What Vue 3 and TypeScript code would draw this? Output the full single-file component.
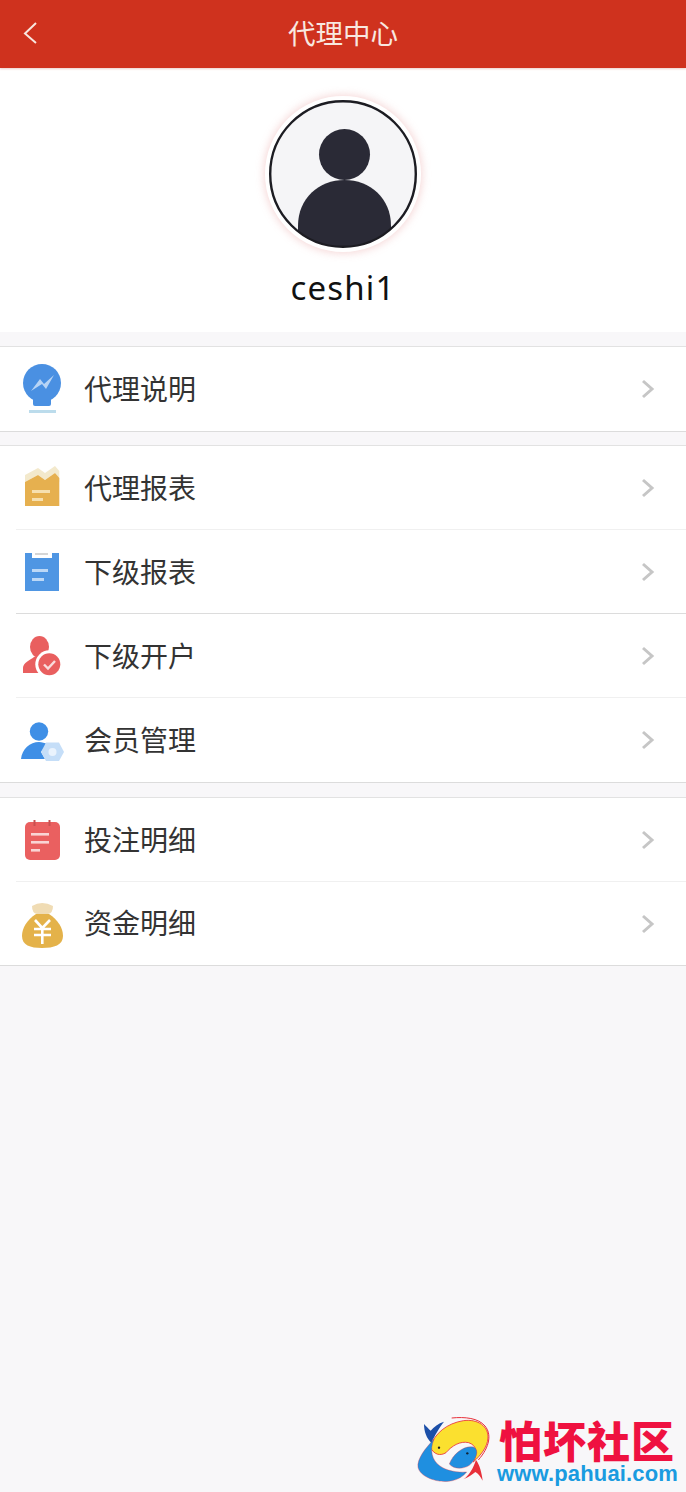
<template>
  <div class="page">
    <header class="top-bar">
      <svg class="back" width="18" height="24" viewBox="0 0 18 24">
        <path d="M15 2 L4 12.5 L15 22" fill="none" stroke="#f8e6df" stroke-width="2" />
      </svg>
      <h1 class="top-title">代理中心</h1>
    </header>

    <section class="profile">
      <div class="avatar">
        <svg width="148" height="148" viewBox="0 0 148 148">
          <defs>
            <clipPath id="avatar-clip"><circle cx="74" cy="74" r="73" /></clipPath>
          </defs>
          <circle cx="74" cy="74" r="73" fill="#f5f5f7" />
          <g clip-path="url(#avatar-clip)" fill="#2a2a36">
            <circle cx="75.500" cy="54.500" r="25.500" />
            <path d="M29 150 V126 C29 98 50 80 75.500 80 C101 80 122 98 122 126 V150 Z" />
          </g>
          <circle cx="74" cy="74" r="72.800" fill="none" stroke="#1c1c22" stroke-width="2.400" />
        </svg>
      </div>
      <div class="user-name">ceshi1</div>
    </section>

    <section v-for="(group, g) in groups" :key="g" class="group">
      <div v-for="(row, i) in group" :key="row.label" class="row">
        <svg class="icon" width="48" height="52" viewBox="0 0 48 52">
          <template v-if="row.icon === 'bulb'">
            <circle cx="24" cy="20" r="19" fill="#4a90e2" />
            <path d="M15 34 H33 V41 Q33 43 31 43 H17 Q15 43 15 41 Z" fill="#4a90e2" />
            <rect x="11" y="47" width="27" height="3" fill="#bcdcec" />
            <path d="M13 28 L22 16 L26 21 L36 12 L28 26 L24 21 Z" fill="#b8d4f5" />
          </template>
          <template v-else-if="row.icon === 'folder'">
            <path d="M7 13 L20 6 L27 11 L37 4 L41.300 9 V20 L37 11 L27 18 L20 13 L7 20 Z" fill="#f3e9cc" />
            <path d="M7 20 L20 13 L27 18 L37 11 L41.300 16 V44 H7 Z" fill="#e6b04f" />
            <rect x="14" y="28" width="18" height="3" fill="#f6e0b0" />
            <rect x="14" y="36" width="11" height="3" fill="#f6e0b0" />
          </template>
          <template v-else-if="row.icon === 'clipboard'">
            <rect x="7" y="7" width="34" height="38" fill="#4f96e3" />
            <rect x="14" y="6" width="20" height="6" fill="#fff" />
            <rect x="17" y="7" width="13" height="2" fill="#d6d6d6" />
            <rect x="14" y="23" width="16" height="3" fill="#bcd8f6" />
            <rect x="14" y="32" width="12" height="3" fill="#bcd8f6" />
          </template>
          <template v-else-if="row.icon === 'user-check'">
            <ellipse cx="21.500" cy="17" rx="9.500" ry="11" fill="#e95f5f" />
            <path d="M5 43 V38 C5 33 12 30 16 27 H27 C31 30 36 32 38 36 V43 Z" fill="#e95f5f" />
            <circle cx="31.300" cy="34.300" r="14" fill="#fff" />
            <circle cx="31.300" cy="34.300" r="11" fill="#e95f5f" />
            <path d="M26 34.500 L30 38.500 L37 31" fill="none" stroke="#f9dcdc" stroke-width="2.400" />
          </template>
          <template v-else-if="row.icon === 'user-gear'">
            <circle cx="21" cy="17.500" r="9.200" fill="#3f8fe6" />
            <path d="M3 45 C4 35 12 28 21 28 C24 28 27 29 29 30 L23 38 L27 45 Z" fill="#3f8fe6" />
            <path d="M28 28.500 H41 L46 38 L41 47 H28 L23 38 Z" fill="#c5def8" />
            <circle cx="34.500" cy="38" r="4" fill="#eaf3fd" />
          </template>
          <template v-else-if="row.icon === 'calendar'">
            <rect x="7" y="8" width="35" height="38" rx="5" fill="#ea6060" />
            <rect x="15.500" y="6" width="2" height="6" fill="#c95050" />
            <rect x="30.500" y="6" width="2" height="6" fill="#c95050" />
            <rect x="13" y="19" width="18" height="2.600" fill="#f9d4d4" />
            <rect x="13" y="27" width="18" height="2.600" fill="#f9d4d4" />
            <rect x="13" y="35" width="9" height="2.600" fill="#f9d4d4" />
          </template>
          <template v-else>
            <path d="M14 8 Q24 2 35 8 Q35 15 30 16 H19 Q14 15 14 8 Z" fill="#f0dcb4" />
            <path d="M18 16 H31 C40 22 45 30 45 38 C45 47 36 50 24 50 C12 50 4 47 4 38 C4 30 9 22 18 16 Z" fill="#e4b24a" />
            <path d="M17 22 L24.300 30 L32 22 M16 31 H33 M16 37 H33 M24.300 30 V46" fill="none" stroke="#fff" stroke-width="2.600" />
          </template>
        </svg>
        <span class="label">{{ row.label }}</span>
        <svg class="arrow" width="14" height="20" viewBox="0 0 14 20">
          <path d="M2 2 L11 10 L2 18" fill="none" stroke="#c6c6c6" stroke-width="3" />
        </svg>
        <i v-if="i < group.length - 1" class="divider" :class="{ dark: row.dark }"></i>
      </div>
    </section>

    <!-- 水印 -->
    <div class="watermark">
      <svg width="90" height="80" viewBox="0 0 270 240">
        <path d="M125 24 C165 20 205 24 225 48 C245 72 240 110 205 150" fill="none" stroke="#e8303a" stroke-width="3" />
        <path d="M60 110 C75 70 110 40 160 32 C205 26 236 50 234 84 C232 112 212 136 190 156 C204 128 200 106 176 98 C150 92 125 108 108 128 C92 138 72 136 60 110 Z" fill="#fbe02f" stroke="#e8303a" stroke-width="2.500" />
        <path d="M72 88 C46 114 20 148 24 172 C30 200 78 218 116 214 C146 210 160 198 170 186 C140 188 110 182 90 168 C66 152 58 120 72 88 Z" fill="#1f8fe0" stroke="#e8303a" stroke-width="1" />
        <path d="M118 162 C130 130 165 104 192 112 C208 120 200 148 178 166 C160 178 130 178 118 162 Z" fill="#1f8fe0" stroke="#e8303a" stroke-width="1" />
        <path d="M42 42 C50 50 55 56 62 62 C72 50 85 40 102 35 C90 50 75 75 64 98 C50 85 42 65 42 42 Z" fill="#1c4fa8" />
        <path d="M160 208 C176 198 190 175 198 150 C208 162 216 190 218 212 C210 198 204 190 196 186 C186 194 174 202 160 208 Z" fill="#e8303a" />
        <circle cx="87" cy="113" r="3.500" fill="#222" />
        <circle cx="172" cy="130" r="3.500" fill="#123" />
      </svg>
      <div class="mark-text">
        <div class="mark-cn">怕坏社区</div>
        <div class="mark-url">www.pahuai.com</div>
      </div>
    </div>
  </div>
</template>

<script setup lang="ts">
interface MenuRow {
  label: string
  icon: string
  dark?: boolean
}

const groups: MenuRow[][] = [
  [{ label: '代理说明', icon: 'bulb' }],
  [
    { label: '代理报表', icon: 'folder' },
    { label: '下级报表', icon: 'clipboard', dark: true },
    { label: '下级开户', icon: 'user-check' },
    { label: '会员管理', icon: 'user-gear' },
  ],
  [
    { label: '投注明细', icon: 'calendar' },
    { label: '资金明细', icon: 'bag' },
  ],
]
</script>

<style>
html,
body {
  background: #f8f7f9;
}
</style>

<style scoped>
.page {
  position: relative;
  height: 1492px;
  overflow: hidden;
  background: #f8f7f9;
  font-family: "Noto Sans CJK SC", "Noto Sans", sans-serif;
}

.top-bar {
  position: relative;
  height: 68px;
  background: #cf321e;
  display: flex;
  align-items: center;
  justify-content: center;
  box-shadow: 0 1px 2px rgba(180, 60, 40, 0.25);
}

.back {
  position: absolute;
  left: 21px;
  top: 21px;
}

.top-title {
  margin: 0;
  padding-bottom: 4px;
  font-size: 27.500px;
  font-weight: 400;
  color: #f8e8e0;
}

.profile {
  height: 264px;
  background: #fff;
  display: flex;
  flex-direction: column;
  align-items: center;
  padding-top: 28px;
  box-sizing: border-box;
}

.avatar {
  width: 148px;
  height: 148px;
  border-radius: 50%;
  border: 4px solid #fff;
  box-shadow: 0 0 8px 1px rgba(230, 150, 150, 0.4);
  background: #fff;
}

.user-name {
  margin-top: 12px;
  font-family: "Noto Sans", sans-serif;
  font-size: 33px;
  line-height: 48px;
  letter-spacing: 1.200px;
  color: #111;
}

.group {
  margin-top: 13px;
  background: #fff;
  border-top: 1px solid #e2e2e2;
  border-bottom: 1px solid #dcdcdc;
}

.profile + .group {
  margin-top: 14px;
}

.group:last-of-type {
  margin-top: 14px;
}

.group:last-of-type .row:last-child {
  height: 83px;
}

.row {
  position: relative;
  height: 84px;
  display: flex;
  align-items: center;
  padding-left: 18px;
  padding-right: 31px;
}

.icon {
  flex: none;
  overflow: visible;
}

.label {
  flex: 1;
  margin-left: 18px;
  padding-bottom: 3px;
  font-size: 28px;
  color: #333;
}

.arrow {
  flex: none;
}

.divider {
  position: absolute;
  left: 16px;
  right: 0;
  bottom: 0;
  height: 1px;
  background: #f0f0f0;
}

.divider.dark {
  background: #dcdcdc;
}

.watermark {
  position: absolute;
  left: 410px;
  top: 1410px;
  display: flex;
}

.mark-text {
  width: 180px;
  margin-left: -3px;
  padding-top: 6px;
  text-align: center;
}

.mark-cn {
  font-size: 43px;
  line-height: 46px;
  font-weight: 900;
  letter-spacing: 1px;
  color: #ef1140;
  white-space: nowrap;
}

.mark-url {
  font-family: "Liberation Sans", sans-serif;
  font-size: 22px;
  line-height: 24px;
  font-weight: 700;
  letter-spacing: 0.150px;
  color: #1a9be0;
  white-space: nowrap;
}
</style>
